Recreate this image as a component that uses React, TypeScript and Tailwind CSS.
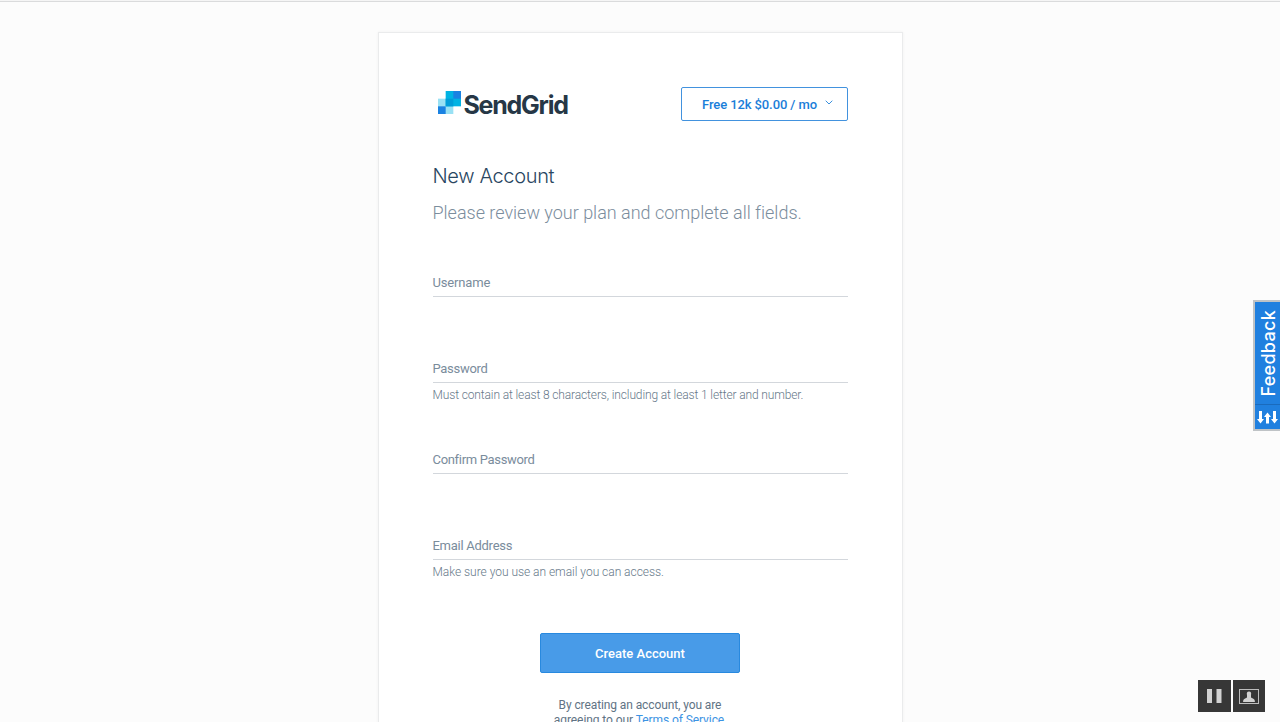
import React from "react";

type FieldProps = { label: string; hint?: string; labelClass: string; hintClass?: string; className: string };

function Field({ label, hint, labelClass, hintClass = "", className }: FieldProps) {
  return (
    <div className={className}>
      <label className="flex h-7 items-center border-b border-[#d3d7dc] text-[13px] text-[#7a8c9c]">
        <span className={labelClass}>{label}</span>
      </label>
      {hint && (
        <p className="mt-[3px] h-[19px] text-xs leading-[18px] whitespace-nowrap text-[#667889]">
          <span className={hintClass}>{hint}</span>
        </p>
      )}
    </div>
  );
}

function Logo() {
  return (
    <div className="flex h-[34px] items-start pl-[5px]">
      <svg width="23" height="23" viewBox="0 0 23 23" className="mt-1 shrink-0">
        <rect x="0" y="7.67" width="15.33" height="15.33" fill="#99e1f4" />
        <rect x="7.67" y="0" width="15.33" height="15.33" fill="#00b3e3" />
        <rect x="0" y="15.33" width="7.67" height="7.67" fill="#1a82e2" />
        <rect x="15.33" y="0" width="7.67" height="7.67" fill="#1a82e2" />
        <rect x="7.67" y="7.67" width="7.67" height="7.67" fill="#009dd9" />
      </svg>
      <span className="ml-[3px] text-[25px] leading-[37px] font-bold tracking-[-1.25px] text-[#263746]">
        SendGrid
      </span>
    </div>
  );
}

function Feedback() {
  return (
    <button className="absolute top-[300px] right-0 flex h-[131px] w-[27px] flex-col border-2 border-r-0 border-[#bfc3c6] bg-[#2080df] text-white">
      <span className="flex h-[102px] w-full items-center justify-center">
        <span className="rotate-180 pr-[3px] text-[18px] leading-[22px] font-medium tracking-[0.3px] [writing-mode:vertical-rl]">Feedback</span>
      </span>
      <span className="flex w-full flex-1 items-center justify-center border-t border-[#1a6bbd] bg-[#2080df]">
        <svg width="21" height="13" viewBox="0 0 21 13" fill="#fff">
          <path d="M2 0h3v8h2l-3.500 4.500L0 8h2zM9 12.500h3V6h2l-3.500-4.500L7 6h2zM16 0h3v8h2l-3.500 4.500L14 8h2z" />
        </svg>
      </span>
    </button>
  );
}

export default function App() {
  return (
    <div className="relative h-[722px] w-full overflow-hidden bg-[#fcfcfc] [font-family:Inter,'Liberation_Sans',sans-serif]">
      <div className="h-[2px] border-b border-[#dadbdc] bg-[#f5f5f5]" />
      <main className="mx-auto mt-[30px] h-[760px] w-[525px] border border-[#eaebec] bg-white px-[54px] pt-[54px] shadow-[0_0_3px_rgba(0,0,0,0.05)]">
        <header className="flex items-start justify-between">
          <Logo />
          <button className="flex h-[34px] w-[167px] items-center rounded-xs border border-[#4292de] pl-5 text-[13px] font-medium whitespace-nowrap text-[#1a7ed9] [font-family:Roboto,sans-serif]">
            <span className="w-[116px] pt-px tracking-[-0.1px]">Free 12k $0.00 / mo</span>
            <svg width="8" height="5" viewBox="0 0 8 5" className="mb-[3px] ml-[7px]" fill="none" stroke="#3a90dd">
              <path d="M0.7 0.7L4 4L7.3 0.7" />
            </svg>
          </button>
        </header>
        <h1 className="mt-[41px] h-7 text-[20px] leading-7 font-light whitespace-nowrap text-[#294661]">
          <span className="tracking-[-0.34px]">New Account</span>
        </h1>
        <p className="mt-[9px] h-[27px] text-[18px] leading-[27px] font-light whitespace-nowrap text-[#7b8d9d] [font-family:Roboto,sans-serif]">
          <span className="tracking-[-0.01px]">Please review your plan and complete all fields.</span>
        </p>
        <form className="[font-family:Roboto,sans-serif]">
          <Field label="Username" labelClass="tracking-[-0.15px]" className="mt-[43px]" />
          <Field label="Password" labelClass="tracking-[-0.3px]" className="mt-[58px]" hint="Must contain at least 8 characters, including at least 1 letter and number." hintClass="font-light tracking-[-0.13px]" />
          <Field label="Confirm Password" labelClass="tracking-[-0.32px]" className="mt-[41px]" />
          <Field label="Email Address" labelClass="tracking-[-0.27px]" className="mt-[58px]" hint="Make sure you use an email you can access." hintClass="font-light tracking-[-0.03px]" />
          <button type="button" className="mx-auto mt-[51px] flex h-10 w-[200px] items-center justify-center rounded-xs border border-[#2889df] bg-[#489be8] text-[13px] font-medium text-white">
            <span className="pt-px">Create Account</span>
          </button>
        </form>
        <p className="mt-[25px] text-center text-xs leading-[15px] whitespace-nowrap text-[#617384] [font-family:Roboto,sans-serif]">
          <span className="tracking-[-0.1px]">By creating an account, you are</span>
          <br />
          <span className="mr-[2px] tracking-[-0.08px]">
            agreeing to our <a className="text-[#3c93e3]">Terms of Service</a>
          </span>
        </p>
      </main>
      <Feedback />
      <div className="absolute top-[680px] right-[15px] flex gap-[2px]">
        <button className="flex h-8 w-[33px] items-center justify-center bg-[#373737]">
          <svg width="15" height="14" viewBox="0 0 15 14" fill="#d2d2d2" className="mr-px">
            <path d="M0 0h5v14H0zM9.500 0h5v14h-5z" />
          </svg>
        </button>
        <button className="flex h-8 w-8 items-center justify-center bg-[#373737]">
          <svg width="20" height="15" viewBox="0 0 20 15">
            <rect x="0.5" y="0.5" width="19" height="14" fill="none" stroke="#bdbdbd" />
            <path d="M10 2.500c1.900 0 2.600 1.700 2 3.500v2.500l2.300 1.200c1.200.6 1.600 1.500 1.600 3.300H4.100c0-1.800.4-2.700 1.600-3.300L8 8.500V6C7.400 4.200 8.100 2.500 10 2.500z" fill="#d2d2d2" />
          </svg>
        </button>
      </div>
    </div>
  );
}
